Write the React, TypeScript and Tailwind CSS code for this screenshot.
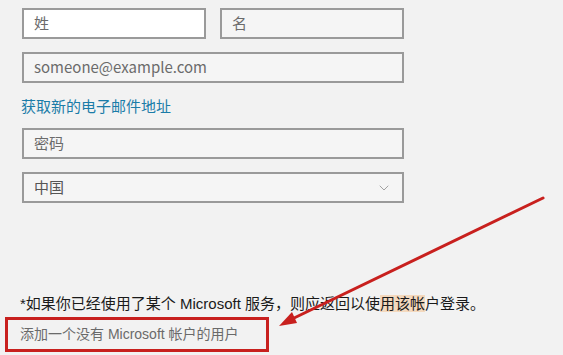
import { ChevronDown } from 'lucide-react';

const font = { fontFamily: '"Microsoft YaHei", "Noto Sans CJK SC", "Noto Sans", sans-serif' };
const mixed = { fontFamily: '"Segoe UI", "Liberation Sans", "Noto Sans CJK SC", sans-serif' };

const Field = ({ placeholder, white, className = '' }: { placeholder: string; white?: boolean; className?: string }) => (
    <div
        className={`h-[31px] flex items-center pl-[10px] border-2 border-[#9a9a9a] text-[15px] text-[#6b6b6b] ${white ? 'bg-white' : 'bg-[#f5f5f5]'} ${className}`}
    >
        {placeholder}
    </div>
);

export default function App() {
    return (
        <div className="relative w-[563px] h-[355px] overflow-hidden bg-[#f2f2f2]" style={font}>
            <div className="pl-[22px] pt-[8px] w-[404px] flex flex-col">
                <div className="flex gap-[14px]">
                    <Field placeholder="姓" white className="w-[184px]" />
                    <Field placeholder="名" className="flex-1" />
                </div>
                <Field placeholder="someone@example.com" className="mt-[13px]" />
                <a className="mt-[13px] h-[20px] text-[15px] leading-[20px] text-[#1b7ca8] -ml-[1px]">获取新的电子邮件地址</a>
                <Field placeholder="密码" className="mt-[12px]" />
                <div className="mt-[13px] h-[31px] flex items-center justify-between pl-[10px] pr-[10px] border-2 border-[#9a9a9a] bg-[#f5f5f5] text-[15px] text-[#555]">
                    <span>中国</span>
                    <ChevronDown size={16} strokeWidth={1} color="#777" />
                </div>
            </div>

            <div className="mt-[91px] pl-[20px] text-[15px] leading-[20px] text-[#1a1a1a] whitespace-nowrap" style={mixed}>
                *如果你已经使用了某个 Microsoft 服务，则应返回以使
                <span className="bg-[#f5c08a]/50">用该帐</span>户登录。
            </div>
            <div
                className="ml-[5px] mt-[3px] w-[264px] h-[35px] border-[3px] border-[#c8201e] flex items-center pl-[12px] text-[14px] text-[#6a6a6a] whitespace-nowrap"
                style={mixed}
            >
                添加一个没有 Microsoft 帐户的用户
            </div>

            <svg className="absolute left-0 top-0" width="563" height="355" viewBox="0 0 563 355">
                <line x1="543" y1="198" x2="292" y2="319" stroke="#c8201e" strokeWidth="3" strokeLinecap="round" />
                <polygon points="279,326 292,312 297,323" fill="#c8201e" />
            </svg>
        </div>
    );
}
